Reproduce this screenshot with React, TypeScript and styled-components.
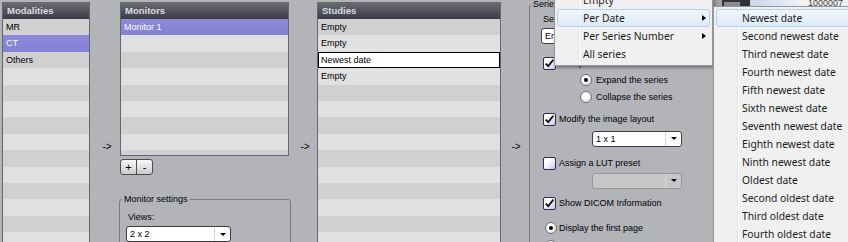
import React from 'react';
import styled, { createGlobalStyle, css } from 'styled-components';

const GlobalStyle = createGlobalStyle`
    html, body {
        margin: 0;
        padding: 0;
    }
    body {
        background: #b3b4b8;
        font-family: 'Liberation Sans', Arial, sans-serif;
        overflow: hidden;
    }
`;

const Page = styled.div`
    position: relative;
    display: flex;
    align-items: flex-start;
    width: 848px;
    height: 242px;
    overflow: hidden;
    background: #b3b4b8;
    font-size: 9px;
    color: #000;
`;

const ListPanel = styled.div<{ $width: number; $height: number; $left?: number }>`
    box-sizing: border-box;
    flex-shrink: 0;
    width: ${p => p.$width}px;
    height: ${p => p.$height}px;
    margin-top: 2px;
    margin-left: ${p => p.$left ?? 0}px;
    border: 1px solid #66666b;
    background: #e0e0e0;
    overflow: hidden;
`;

const ListHeader = styled.div`
    height: 16px;
    line-height: 16px;
    padding-left: 4px;
    background: linear-gradient(#6a6a72, #3b3b43);
    color: #dcdce4;
    font-weight: bold;
    font-size: 9.5px;
`;

const ListRow = styled.div<{ $odd: boolean; $state?: 'selected' | 'focus' }>`
    box-sizing: border-box;
    height: 16.4px;
    line-height: 16.4px;
    padding-left: 3px;
    white-space: nowrap;
    background: ${p => (p.$odd ? '#e0e0e0' : '#d0d0d0')};
    ${p => p.$state === 'selected' && css`
        background: linear-gradient(#8d89dc, #8480d4);
        color: #fff;
    `}
    ${p => p.$state === 'focus' && css`
        background: #fff;
        box-shadow: inset 0 0 0 1px #000;
    `}
`;

const Gap = styled.div<{ $width: number; $shift: number }>`
    box-sizing: border-box;
    flex-shrink: 0;
    display: flex;
    justify-content: center;
    width: ${p => p.$width}px;
    padding-top: 141px;
    padding-left: ${p => p.$shift}px;
    font-size: 10px;
    line-height: 12px;
`;

const Column = styled.div<{ $width: number }>`
    display: flex;
    flex-direction: column;
    flex-shrink: 0;
    width: ${p => p.$width}px;
`;

const ButtonPair = styled.div`
    display: flex;
    margin: 3px 0 0 1px;
`;

const SmallButton = styled.button<{ $side: 'left' | 'right' }>`
    width: 17px;
    height: 16px;
    padding: 0;
    border: 1px solid #4b4b50;
    background: linear-gradient(#f7f7f7, #cbcbce);
    font-family: 'Liberation Sans', Arial, sans-serif;
    font-size: 11px;
    line-height: 12px;
    color: #000;
    border-radius: ${p => (p.$side === 'left' ? '3px 0 0 3px' : '0 3px 3px 0')};
    margin-left: ${p => (p.$side === 'right' ? '-1px' : '0')};
`;

const GroupBox = styled.fieldset<{ $width: number; $top: number; $pad: string }>`
    box-sizing: border-box;
    flex-shrink: 0;
    display: flex;
    flex-direction: column;
    align-items: flex-start;
    width: ${p => p.$width}px;
    min-width: 0;
    margin: ${p => p.$top}px 0 0 0;
    padding: ${p => p.$pad};
    border: 1px solid #7a7a7f;
    border-radius: 3px;
`;

const GroupLegend = styled.legend<{ $shift: number }>`
    padding: 0 2px;
    margin-left: ${p => p.$shift}px;
    font-size: 9px;
    line-height: 11px;
`;

const FieldLabel = styled.div<{ $indent: number }>`
    margin-left: ${p => p.$indent}px;
    line-height: 11px;
    white-space: nowrap;
`;

const Combo = styled.div<{ $width: number; $top: number; $indent: number; $disabled?: boolean }>`
    box-sizing: border-box;
    display: flex;
    align-items: stretch;
    width: ${p => p.$width}px;
    height: 16px;
    margin: ${p => p.$top}px 0 0 ${p => p.$indent}px;
    border: 1px solid ${p => (p.$disabled ? '#96969a' : '#3e3e42')};
    border-radius: 3px;
    background: ${p => (p.$disabled ? '#c6c6c8' : '#fff')};
    flex-shrink: 0;
`;

const ComboText = styled.span`
    flex: 1;
    padding-left: 3px;
    line-height: 14px;
    white-space: nowrap;
    overflow: hidden;
`;

const ComboButton = styled.span`
    display: flex;
    align-items: center;
    justify-content: center;
    width: 15px;
    border-left: 1px solid #d6d6d8;
    &::after {
        content: '';
        border-top: 3px solid #000;
        border-left: 3px solid transparent;
        border-right: 3px solid transparent;
    }
`;

const OptionRow = styled.label<{ $top: number; $indent: number; $gap: number }>`
    display: flex;
    align-items: center;
    gap: ${p => p.$gap}px;
    height: 13px;
    margin: ${p => p.$top}px 0 0 ${p => p.$indent}px;
    white-space: nowrap;
    flex-shrink: 0;
`;

const CheckBox = styled.span`
    box-sizing: border-box;
    display: flex;
    align-items: center;
    justify-content: center;
    width: 13px;
    height: 13px;
    border: 1px solid #2b2b55;
    border-radius: 2px;
    background: linear-gradient(135deg, #ffffff 35%, #c6c5e6);
`;

const Radio = styled.span<{ $on?: boolean }>`
    box-sizing: border-box;
    display: flex;
    align-items: center;
    justify-content: center;
    width: 12px;
    height: 12px;
    border: 1px solid #6e6e78;
    border-radius: 50%;
    background: radial-gradient(circle at 40% 35%, #ffffff 30%, #d2d2dc);
    &::after {
        content: '';
        display: ${p => (p.$on ? 'block' : 'none')};
        width: 4px;
        height: 4px;
        border-radius: 50%;
        background: #000;
    }
`;

const RightArea = styled.div`
    flex: 1;
    display: flex;
    height: 8px;
    overflow: hidden;
`;

const BackPiece = styled.div<{ $w?: number; $bg: string }>`
    box-sizing: border-box;
    width: ${p => (p.$w ? `${p.$w}px` : 'auto')};
    flex: ${p => (p.$w ? '0 0 auto' : '1')};
    background: ${p => p.$bg};
    font-size: 9px;
    line-height: 6px;
    color: #444;
    padding-left: 8px;
    overflow: hidden;
`;

const Menu = styled.div<{ $left: number; $top: number; $width: number }>`
    position: absolute;
    left: ${p => p.$left}px;
    top: ${p => p.$top}px;
    width: ${p => p.$width}px;
    box-sizing: border-box;
    padding: 2px;
    border: 1px solid #979797;
    background: linear-gradient(to right, #f0f0f0 23px, #e2e3e3 23px, #e2e3e3 24px, #ffffff 24px, #ffffff 25px, #f0f0f0 25px);
    box-shadow: 2px 2px 3px rgba(0, 0, 0, 0.35);
    font-family: 'Noto Sans', 'Open Sans', sans-serif;
    font-size: 10.3px;
    color: #1b1b1b;
`;

const MenuItem = styled.div<{ $active?: boolean }>`
    box-sizing: border-box;
    display: flex;
    align-items: center;
    justify-content: space-between;
    height: 18px;
    padding: 0 4px 0 26px;
    border-radius: 3px;
    white-space: nowrap;
    ${p => p.$active && css`
        padding: 0 3px 0 25px;
        border: 1px solid #b3d2f0;
        background: linear-gradient(rgba(240, 246, 253, 0.85), rgba(220, 234, 250, 0.85));
    `}
`;

const SubArrow = styled.span`
    border-left: 4px solid #000;
    border-top: 3.5px solid transparent;
    border-bottom: 3.5px solid transparent;
`;

const Check = () => (
    <CheckBox>
        <svg width="11" height="11" viewBox="0 0 11 11">
            <path d="M1.8 5.6 L4.2 8.2 L9.4 1.6" fill="none" stroke="#000" strokeWidth="1.7" />
        </svg>
    </CheckBox>
);

const modalities = ['MR', 'CT', 'Others'];
const studies = ['Empty', 'Empty', 'Newest date', 'Empty'];
const dateItems = [
    'Newest date', 'Second newest date', 'Third newest date', 'Fourth newest date',
    'Fifth newest date', 'Sixth newest date', 'Seventh newest date', 'Eighth newest date',
    'Ninth newest date', 'Oldest date', 'Second oldest date', 'Third oldest date', 'Fourth oldest date',
];

function rows(items: string[], count: number, selected: number, focus = -1) {
    return Array.from({ length: count }, (_, i) => (
        <ListRow
            key={i}
            $odd={i % 2 === 1}
            $state={i === selected ? 'selected' : i === focus ? 'focus' : undefined}
        >
            {items[i] ?? ''}
        </ListRow>
    ));
}

function App() {
    return (
        <>
            <GlobalStyle />
            <Page>
                <ListPanel $width={88} $height={262} $left={2}>
                    <ListHeader>Modalities</ListHeader>
                    {rows(modalities, 15, 1)}
                </ListPanel>

                <Gap $width={29} $shift={5}>-&gt;</Gap>

                <Column $width={172}>
                    <ListPanel $width={169} $height={154} $left={1}>
                        <ListHeader>Monitors</ListHeader>
                        {rows(['Monitor 1'], 9, 0)}
                    </ListPanel>
                    <ButtonPair>
                        <SmallButton $side="left">+</SmallButton>
                        <SmallButton $side="right">-</SmallButton>
                    </ButtonPair>
                    <GroupBox $width={172} $top={18.5} $pad="7px 6px 10px 6px">
                        <GroupLegend $shift={-4}>Monitor settings</GroupLegend>
                        <FieldLabel $indent={2}>Views:</FieldLabel>
                        <Combo $width={105} $top={3.5} $indent={0}>
                            <ComboText>2 x 2</ComboText>
                            <ComboButton />
                        </Combo>
                    </GroupBox>
                </Column>

                <Gap $width={26} $shift={2}>-&gt;</Gap>

                <ListPanel $width={184} $height={262}>
                    <ListHeader>Studies</ListHeader>
                    {rows(studies, 15, -1, 2)}
                </ListPanel>

                <Gap $width={28} $shift={2}>-&gt;</Gap>

                <GroupBox $width={185} $top={-1.5} $pad="4px 6px 10px 11px">
                    <GroupLegend $shift={-10}>Series settings</GroupLegend>
                    <FieldLabel $indent={2}>Series layout:</FieldLabel>
                    <Combo $width={150} $top={3} $indent={0}>
                        <ComboText>Empty</ComboText>
                        <ComboButton />
                    </Combo>
                    <OptionRow $top={13} $indent={2} $gap={3}>
                        <Check />
                        <span>Group the series</span>
                    </OptionRow>
                    <OptionRow $top={4} $indent={39} $gap={4}>
                        <Radio $on />
                        <span>Expand the series</span>
                    </OptionRow>
                    <OptionRow $top={4} $indent={39} $gap={4}>
                        <Radio />
                        <span>Collapse the series</span>
                    </OptionRow>
                    <OptionRow $top={9} $indent={2} $gap={3}>
                        <Check />
                        <span>Modify the image layout</span>
                    </OptionRow>
                    <Combo $width={90} $top={5} $indent={51}>
                        <ComboText>1 x 1</ComboText>
                        <ComboButton />
                    </Combo>
                    <OptionRow $top={10} $indent={2} $gap={3}>
                        <CheckBox />
                        <span>Assign a LUT preset</span>
                    </OptionRow>
                    <Combo $width={90} $top={3} $indent={51} $disabled>
                        <ComboText />
                        <ComboButton />
                    </Combo>
                    <OptionRow $top={8} $indent={2} $gap={3}>
                        <Check />
                        <span>Show DICOM Information</span>
                    </OptionRow>
                    <OptionRow $top={12} $indent={4} $gap={2}>
                        <Radio $on />
                        <span>Display the first page</span>
                    </OptionRow>
                    <OptionRow $top={5} $indent={4} $gap={2}>
                        <Radio />
                        <span>Display the last page</span>
                    </OptionRow>
                </GroupBox>

                <RightArea>
                    <BackPiece $w={4} $bg="#a3a4a9" />
                    <BackPiece $w={20} $bg="#8c8c92" style={{ border: '2px solid #34343b' }} />
                    <BackPiece $w={4} $bg="#2f2f36" />
                    <BackPiece $w={50} $bg="linear-gradient(to right, #c9d6ea, #eef2f8)" />
                    <BackPiece $bg="#f2f2f2">1000007</BackPiece>
                </RightArea>

                <Menu $left={554} $top={-12} $width={159}>
                    <MenuItem>Empty</MenuItem>
                    <MenuItem $active>
                        <span>Per Date</span>
                        <SubArrow />
                    </MenuItem>
                    <MenuItem>
                        <span>Per Series Number</span>
                        <SubArrow />
                    </MenuItem>
                    <MenuItem>All series</MenuItem>
                </Menu>

                <Menu $left={713} $top={6} $width={150}>
                    {dateItems.map((d, i) => (
                        <MenuItem key={d} $active={i === 0}>{d}</MenuItem>
                    ))}
                </Menu>
            </Page>
        </>
    );
}

export default App;
